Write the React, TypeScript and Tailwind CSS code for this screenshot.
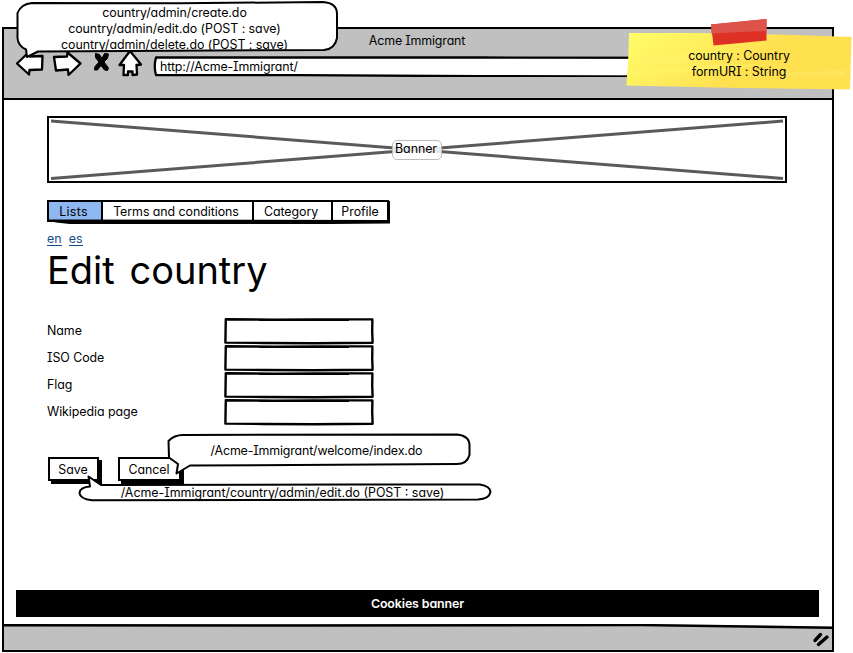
import type { ReactNode } from "react";

const tabs = [
  { label: "Lists", box: "w-[52px] bg-[#90b8f0] pr-[3px] tracking-[0.3px]" },
  { label: "Terms and conditions", box: "w-[151px] border-l-2 pr-[3px]" },
  { label: "Category", box: "w-[79px] border-l-2 pr-[3px]" },
  { label: "Profile", box: "w-[56px] border-l-2" },
];

const fields = ["Name", "ISO Code", "Flag", "Wikipedia page"];

function BrowserIcons() {
  return (
    <svg className="block h-7 w-[132px] shrink-0" viewBox="14 49 132 28" fill="white" stroke="black" strokeWidth="2.3" strokeLinejoin="round">
      <path d="M17 63.5 L29 52 L30 56.5 L42.5 56 L42 69.5 L29.5 70 L29 74.5 Z" />
      <path d="M54 57 L67 56.5 L67.5 52.5 L80.5 63.5 L68.5 75 L68 69.5 L56 70.5 Z" />
      <path
        d="M95.5 53.5 L99.5 54.5 L102 58.5 L104.5 53.5 L108.5 54 L107.5 58.5 L104 62 L108.5 68 L107.5 70.5 L104.5 70 L101 65.5 L97.5 70 L94.5 70 L95 66.5 L99 62 L95.5 57.5 Z"
        fill="black"
        strokeWidth="1"
      />
      <path d="M130 51 L119.5 65 L124 65 L123.5 75 L128 75 L128 71.5 L132.5 71.5 L132.5 75 L137 74.5 L136.5 65 L141 64.5 Z" />
    </svg>
  );
}

function AddressBar() {
  return (
    <div className="relative mt-[7px] flex h-[21px] w-[664px] items-center pl-[7px]">
      <svg className="absolute inset-0 h-full w-full" viewBox="153 56 664 21" fill="white" stroke="black" strokeWidth="2.3" strokeLinejoin="round">
        <path d="M156 57.5 L480 57.5 L815 58 L815 77 L480 76.2 L300 75.2 L156 75 Q153.5 66 156 57.5 Z" />
      </svg>
      <span className="relative tracking-[-0.1px]">http://Acme-Immigrant/</span>
    </div>
  );
}

function Field({ label }: { label: string }) {
  return (
    <label className="flex h-[27px] items-center">
      <span className="w-[177px] pb-px">{label}</span>
      <svg className="h-[27px] w-[150px]" viewBox="0 0 150 27" fill="none" stroke="black" strokeLinejoin="round">
        <path d="M1.8 1.3 L50 1.6 L90 1.4 L148.4 1.4 L148.2 13 L148.6 24.8 L90 25.2 L40 25 L1.4 24.6 L1.6 12 Z" strokeWidth="2.4" />
        <path d="M35 2 L125 2 M40 25 L120 25" strokeWidth="2" />
      </svg>
    </label>
  );
}

function Button({ children, size }: { children: ReactNode; size: string }) {
  return (
    <button className={`flex h-6 items-center justify-center border-2 border-black bg-white pt-[2px] pr-px shadow-[3px_3px_0_black] ${size}`}>
      {children}
    </button>
  );
}

function Callout({ box, viewBox, path, children }: { box: string; viewBox: string; path: string; children: ReactNode }) {
  return (
    <div className={`absolute text-center ${box}`}>
      <svg className="absolute inset-0 h-full w-full" viewBox={viewBox} fill="white" stroke="black" strokeWidth="2" strokeLinejoin="round">
        <path d={path} />
      </svg>
      <div className="relative leading-4 whitespace-nowrap">{children}</div>
    </div>
  );
}

function StickyNote() {
  return (
    <div className="absolute top-[18px] left-[625px] h-[73px] w-[228px] pt-[30px] text-center leading-4">
      <svg className="absolute inset-0 h-full w-full" viewBox="625 18 228 73">
        <defs>
          <linearGradient id="note" x1="0" y1="0" x2="1" y2="0.35">
            <stop offset="0" stopColor="#fffd68" />
            <stop offset="0.4" stopColor="#ffed5c" />
            <stop offset="0.65" stopColor="#ffe150" />
            <stop offset="1" stopColor="#ffe150" />
          </linearGradient>
        </defs>
        <path d="M629 33 L700 33 L795 35 L851.5 37 L850 89.5 L740 88 L626.3 85.5 L628 64 Z" fill="url(#note)" />
        <path d="M629 62 L690 52 L735 51 L670 65 Z M627 70 L720 64 L770 65 L700 72 L627 75 Z" fill="#fff66a" opacity="0.5" />
        <path d="M740 75 L845 70 L845 76 Z" fill="#ffe96b" opacity="0.5" />
        <path d="M711 24.5 L766.5 19 L766.5 40.5 L713.5 45.5 Z" fill="#df3025" />
        <path d="M711 24.5 L766.5 19 L766.5 31 L711.5 33.5 Z" fill="#dd524a" />
      </svg>
      <div className="relative">
        <div>country : Country</div>
        <div>formURI : String</div>
      </div>
    </div>
  );
}

export default function App() {
  return (
    <div className="relative h-[653px] w-[853px] overflow-hidden bg-white pt-[27px] pl-[2px] font-['Inter',sans-serif] text-[12.4px] leading-4 font-[420] tracking-[-0.05px] text-black [font-feature-settings:'cv11','cv08']">
      <div className="flex h-[625px] w-[832px] flex-col border-2 border-black">
        <header className="h-[71px] shrink-0 border-b-2 border-black bg-[#c0c0c0]">
          <div className="h-[19px] pt-1 pr-[2px] text-center tracking-[-0.15px]">Acme Immigrant</div>
          <div className="-mt-px flex pt-[2px] pl-[10px]">
            <BrowserIcons />
            <div className="ml-[7px]">
              <AddressBar />
            </div>
          </div>
        </header>

        <main className="flex h-[524px] shrink-0 flex-col pt-4 pl-[43px]">
          <div className="relative flex h-[67px] w-[740px] items-center justify-center border-2 border-black">
            <svg className="absolute inset-0 h-full w-full" viewBox="49 118 736 63" stroke="#5a5a5a" strokeWidth="3">
              <path d="M51 121 L783 178.5 M51 178.5 L783 121" />
            </svg>
            <span className="relative flex h-5 w-[50px] justify-center rounded-[5px] border border-[#bbb] bg-white/85 pr-[2px]">Banner</span>
          </div>

          <nav className="relative mt-[17px] flex h-[25px] w-[343px]">
            <div className="flex h-[22px] w-[342px] border-2 border-black">
              {tabs.map((t) => (
                <div key={t.label} className={`flex items-center justify-center border-black pt-[2px] ${t.box}`}>
                  {t.label}
                </div>
              ))}
            </div>
            <svg className="absolute inset-0 h-full w-full" viewBox="47 200 343 25">
              <path d="M47 219.5 L387 220 L387 201 L390.5 201 L391 223.5 L330 224 L70 224 L56 222.5 L47 219.5 Z" />
            </svg>
          </nav>

          <div className="mt-[6px] flex gap-[7px] tracking-[0.1px] text-[#164b85]">
            <a className="h-[15px] border-b border-[#164b85]">en</a>
            <a className="h-[15px] border-b border-[#164b85]">es</a>
          </div>

          <h1 className="mt-px text-[38px] leading-[46px] tracking-[0px] [word-spacing:4px]">Edit country</h1>

          <form className="mt-[25px] flex flex-col">
            {fields.map((f) => (
              <Field key={f} label={f} />
            ))}
          </form>

          <div className="mt-[31px] ml-px flex gap-[19px]">
            <Button size="w-[51px]">Save</Button>
            <Button size="w-[63px]">Cancel</Button>
          </div>

          <div className="mt-auto mb-[7px] -ml-[31px] flex h-[27px] w-[803px] items-center justify-center bg-black font-semibold tracking-[-0.1px] text-white">
            Cookies banner
          </div>
        </main>

        <footer className="relative flex flex-1 items-end justify-end bg-[#c0c0c0]">
          <svg className="absolute inset-x-0 top-0 h-[6px] w-full" viewBox="4 624 828 6">
            <path d="M4 624 L640 624 L832 626.5 L832 624 Z" fill="white" />
            <path d="M4 625.2 L300 625.5 L640 625 L832 627.8" fill="none" stroke="black" strokeWidth="2.4" />
          </svg>
          <svg className="relative mr-[2px] mb-[3px] h-4 w-[18px]" viewBox="812 632 18 16" stroke="black" strokeWidth="3.4" strokeLinecap="round">
            <path d="M815 641.5 L820.5 635.5 M818.5 645.5 L827 638" />
          </svg>
        </footer>
      </div>

      <Callout
        box="top-0 left-[15px] h-[60px] w-[324px] pt-[5px] pr-[5px] tracking-[-0.05px]"
        viewBox="15 0 324 60"
        path="M32 3 L180 3.3 L323 2 Q337 3 337 14 L337 38 Q335 49 324 50 L38 51.5 L27 57 L26 49.5 Q18 46 17.5 38 L17.5 13 Q21 4 32 3 Z"
      >
        <div>country/admin/create.do</div>
        <div>country/admin/edit.do (POST : save)</div>
        <div>country/admin/delete.do (POST : save)</div>
      </Callout>

      <Callout
        box="top-[432px] left-[166px] h-[44px] w-[306px] pt-[11px] pr-[5px] tracking-[-0.15px]"
        viewBox="166 432 306 44"
        path="M183 435 L457 434.5 Q470 436 469.5 446 L469.5 455 Q467 464 457 464 L190 465.5 L176.5 473.5 L178 464 L169 457.5 L168.5 441 Q174 435 183 435 Z"
      >
        /Acme-Immigrant/welcome/index.do
      </Callout>

      <Callout
        box="top-[474px] left-[77px] h-[29px] w-[416px] pt-[11px] pr-[5px] tracking-[0px]"
        viewBox="77 474 416 29"
        path="M101 485 L350 484.5 L480 484.5 Q490 486 490.5 492 Q489 499 478 499.5 L92 500.3 Q80 499 79.5 493 Q80 487 90 486.5 L88.5 476.5 Z"
      >
        /Acme-Immigrant/country/admin/edit.do (POST : save)
      </Callout>

      <StickyNote />
    </div>
  );
}
